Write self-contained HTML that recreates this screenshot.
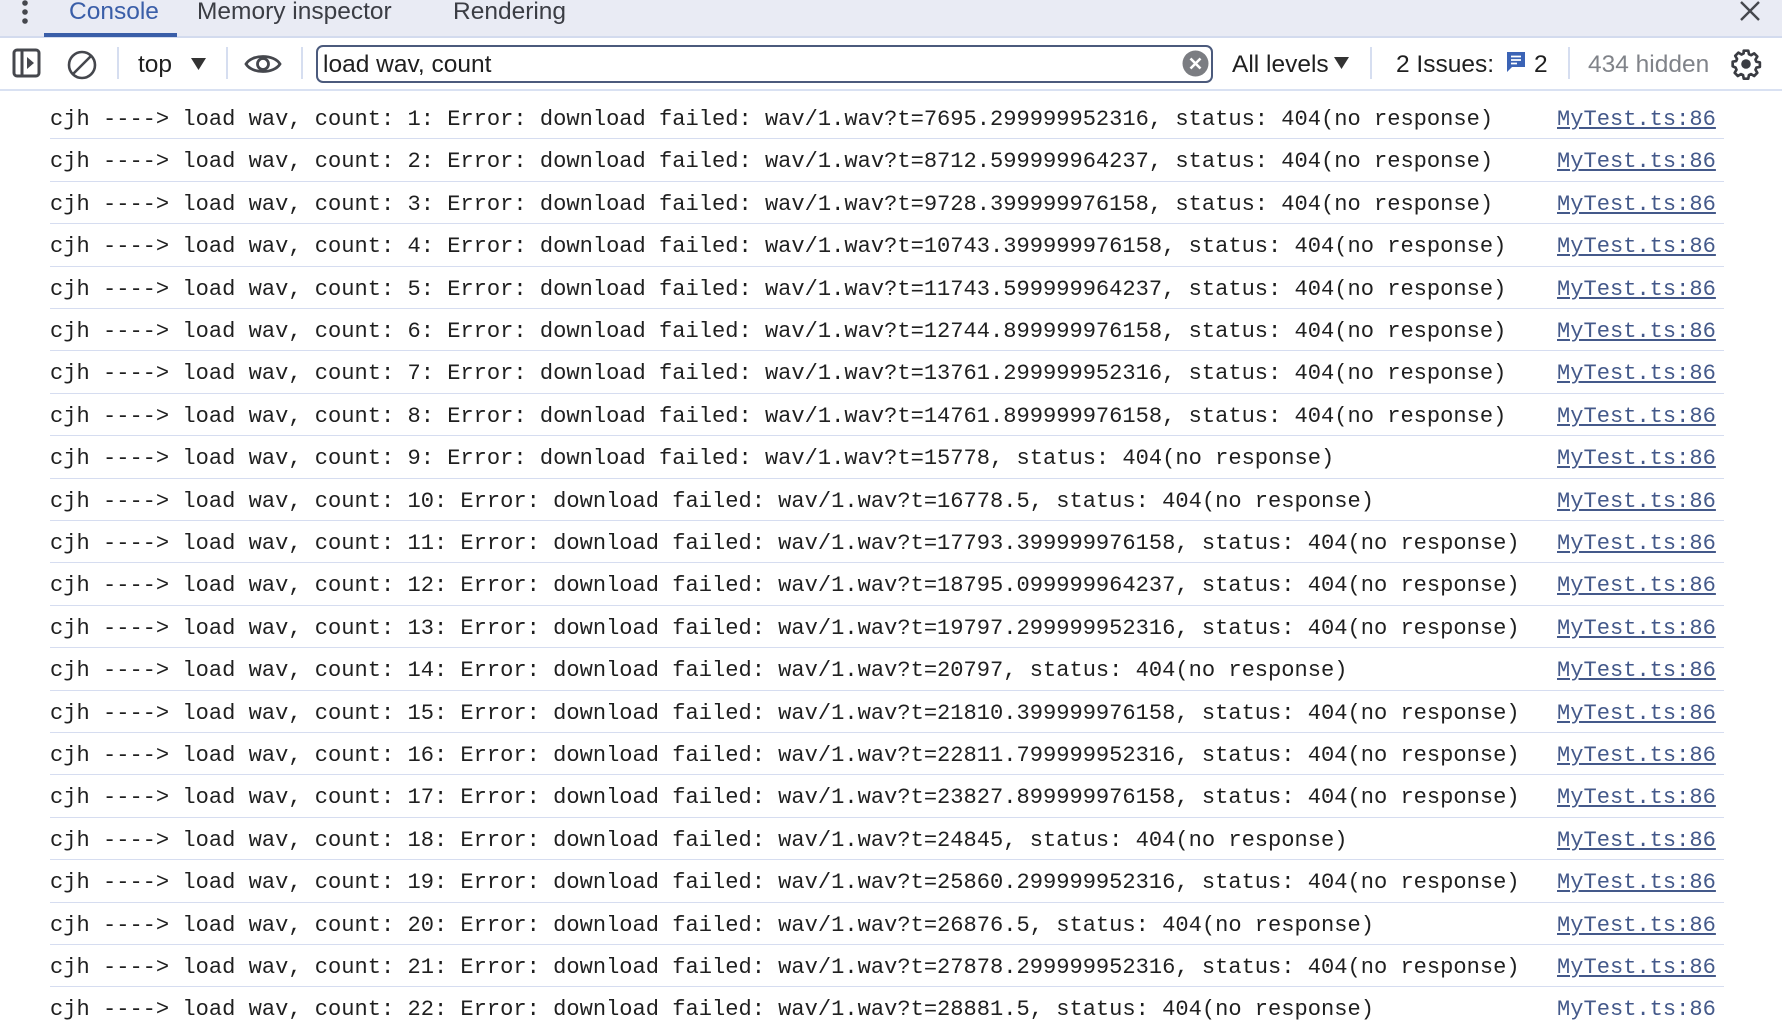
<!DOCTYPE html>
<html><head><meta charset="utf-8"><style>
*{margin:0;padding:0;box-sizing:border-box}
body{width:1782px;height:1018px;overflow:hidden;background:#fff;font-family:"Liberation Sans",Helvetica,sans-serif;position:relative}
.tabs{position:absolute;left:0;top:0;width:1782px;height:38px;background:#e9ebf4;border-bottom:2px solid #d3dbee}
.tab{position:absolute;top:-2px;font-size:24.5px;line-height:28px;color:#3b3d44}
.tb{position:absolute;left:0;top:38px;width:1782px;height:53px;border-bottom:2px solid #d9e1f2;background:#fff}
.t{position:absolute;font-size:24.5px;line-height:28px;color:#1f1f1f;top:13px}
.sep{position:absolute;top:9px;width:2px;height:32px;background:#d6def0}
.row{position:absolute;left:50px;width:1674px;height:42.4px;border-bottom:1.5px solid #d6ddf0}
.m{position:absolute;left:0;top:10px;line-height:26px;font-family:"Liberation Mono",monospace;font-size:22.07px;color:#1f1f1f;white-space:pre}
.lk{position:absolute;left:1507px;top:10px;line-height:26px;font-family:"Liberation Mono",monospace;font-size:22.07px;color:#44598a;text-decoration:underline}
</style></head><body>
<div class="tabs">
<svg style="position:absolute;left:20px;top:0" width="10" height="26"><circle cx="5" cy="3" r="2.8" fill="#45474d"/><circle cx="5" cy="12" r="2.8" fill="#45474d"/><circle cx="5" cy="21" r="2.8" fill="#45474d"/></svg>
<div class="tab" style="left:69px;color:#3a5ea8">Console</div>
<div style="position:absolute;left:44px;top:33px;width:133px;height:4px;background:#3a5ea8"></div>
<div class="tab" style="left:197px">Memory inspector</div>
<div class="tab" style="left:453px">Rendering</div>
<svg style="position:absolute;left:1738px;top:0" width="24" height="24"><path d="M3 2L21 20M21 2L3 20" stroke="#45474d" stroke-width="2.4"/></svg>
</div>
<div class="tb">
<svg style="position:absolute;left:12px;top:10px" width="30" height="30"><rect x="2" y="2" width="25" height="26" rx="3" fill="none" stroke="#45474d" stroke-width="3"/><line x1="10" y1="2" x2="10" y2="28" stroke="#45474d" stroke-width="3"/><path d="M15 9L22 15L15 21Z" fill="#45474d"/></svg>
<svg style="position:absolute;left:66px;top:11px" width="32" height="32"><circle cx="16" cy="16" r="13" fill="none" stroke="#45474d" stroke-width="2.6"/><line x1="7" y1="25" x2="25" y2="7" stroke="#45474d" stroke-width="2.6"/></svg>
<div class="sep" style="left:117px"></div>
<div class="t" style="left:138px">top</div>
<svg style="position:absolute;left:191px;top:20px" width="15" height="13"><path d="M0 0H15L7.5 12Z" fill="#333"/></svg>
<div class="sep" style="left:226px"></div>
<svg style="position:absolute;left:244px;top:12px" width="38" height="28"><path d="M2 14C8 4 30 4 36 14C30 24 8 24 2 14Z" fill="none" stroke="#45474d" stroke-width="2.8"/><circle cx="19" cy="14" r="5.5" fill="none" stroke="#45474d" stroke-width="2.8"/></svg>
<div class="sep" style="left:301px"></div>
<div style="position:absolute;left:316px;top:7px;width:897px;height:38px;border:2px solid #4b5a7c;border-radius:7px"></div>
<div class="t" style="left:323px">load wav, count</div>
<svg style="position:absolute;left:1182px;top:12px" width="27" height="27"><circle cx="13.5" cy="13.5" r="13" fill="#7b7d82"/><path d="M8.5 8.5L18.5 18.5M18.5 8.5L8.5 18.5" stroke="#fff" stroke-width="2.6"/></svg>
<div class="t" style="left:1232px">All levels</div>
<svg style="position:absolute;left:1334px;top:19px" width="15" height="13"><path d="M0 0H15L7.5 12Z" fill="#333"/></svg>
<div class="sep" style="left:1370px"></div>
<div class="t" style="left:1396px">2 Issues:</div>
<svg style="position:absolute;left:1506px;top:13px" width="20" height="23"><path d="M1 1H19V16H6L1 21Z" fill="#3b63b5"/><path d="M5 5.5H15M5 9H15M5 12.5H11" stroke="#fff" stroke-width="1.8"/></svg>
<div class="t" style="left:1534px">2</div>
<div class="sep" style="left:1568px"></div>
<div class="t" style="left:1588px;color:#808389">434 hidden</div>
<svg style="position:absolute;left:1730px;top:10px" width="32" height="32" viewBox="0 0 24 24"><path d="M10.3 2h3.4l.5 2.6 1.6.8 2.3-1.4 2.4 2.4-1.4 2.3.7 1.6 2.6.5v3.4l-2.6.5-.7 1.6 1.4 2.3-2.4 2.4-2.3-1.4-1.6.7-.5 2.7h-3.4l-.5-2.7-1.6-.7-2.3 1.4-2.4-2.4 1.4-2.3-.7-1.6L2 13.7v-3.4l2.6-.5.7-1.6-1.4-2.3 2.4-2.4 2.3 1.4 1.6-.8z" fill="none" stroke="#3a3c42" stroke-width="2" stroke-linejoin="round"/><circle cx="12" cy="12" r="3.6" fill="#3a3c42"/></svg>
</div>
<div class="row" style="top:97px"><span class="m">cjh ----&gt; load wav, count: 1: Error: download failed: wav/1.wav?t=7695.299999952316, status: 404(no response)</span><span class="lk">MyTest.ts:86</span></div>
<div class="row" style="top:139.4px"><span class="m">cjh ----&gt; load wav, count: 2: Error: download failed: wav/1.wav?t=8712.599999964237, status: 404(no response)</span><span class="lk">MyTest.ts:86</span></div>
<div class="row" style="top:181.8px"><span class="m">cjh ----&gt; load wav, count: 3: Error: download failed: wav/1.wav?t=9728.399999976158, status: 404(no response)</span><span class="lk">MyTest.ts:86</span></div>
<div class="row" style="top:224.2px"><span class="m">cjh ----&gt; load wav, count: 4: Error: download failed: wav/1.wav?t=10743.399999976158, status: 404(no response)</span><span class="lk">MyTest.ts:86</span></div>
<div class="row" style="top:266.6px"><span class="m">cjh ----&gt; load wav, count: 5: Error: download failed: wav/1.wav?t=11743.599999964237, status: 404(no response)</span><span class="lk">MyTest.ts:86</span></div>
<div class="row" style="top:309px"><span class="m">cjh ----&gt; load wav, count: 6: Error: download failed: wav/1.wav?t=12744.899999976158, status: 404(no response)</span><span class="lk">MyTest.ts:86</span></div>
<div class="row" style="top:351.4px"><span class="m">cjh ----&gt; load wav, count: 7: Error: download failed: wav/1.wav?t=13761.299999952316, status: 404(no response)</span><span class="lk">MyTest.ts:86</span></div>
<div class="row" style="top:393.8px"><span class="m">cjh ----&gt; load wav, count: 8: Error: download failed: wav/1.wav?t=14761.899999976158, status: 404(no response)</span><span class="lk">MyTest.ts:86</span></div>
<div class="row" style="top:436.2px"><span class="m">cjh ----&gt; load wav, count: 9: Error: download failed: wav/1.wav?t=15778, status: 404(no response)</span><span class="lk">MyTest.ts:86</span></div>
<div class="row" style="top:478.6px"><span class="m">cjh ----&gt; load wav, count: 10: Error: download failed: wav/1.wav?t=16778.5, status: 404(no response)</span><span class="lk">MyTest.ts:86</span></div>
<div class="row" style="top:521px"><span class="m">cjh ----&gt; load wav, count: 11: Error: download failed: wav/1.wav?t=17793.399999976158, status: 404(no response)</span><span class="lk">MyTest.ts:86</span></div>
<div class="row" style="top:563.4px"><span class="m">cjh ----&gt; load wav, count: 12: Error: download failed: wav/1.wav?t=18795.099999964237, status: 404(no response)</span><span class="lk">MyTest.ts:86</span></div>
<div class="row" style="top:605.8px"><span class="m">cjh ----&gt; load wav, count: 13: Error: download failed: wav/1.wav?t=19797.299999952316, status: 404(no response)</span><span class="lk">MyTest.ts:86</span></div>
<div class="row" style="top:648.2px"><span class="m">cjh ----&gt; load wav, count: 14: Error: download failed: wav/1.wav?t=20797, status: 404(no response)</span><span class="lk">MyTest.ts:86</span></div>
<div class="row" style="top:690.6px"><span class="m">cjh ----&gt; load wav, count: 15: Error: download failed: wav/1.wav?t=21810.399999976158, status: 404(no response)</span><span class="lk">MyTest.ts:86</span></div>
<div class="row" style="top:733px"><span class="m">cjh ----&gt; load wav, count: 16: Error: download failed: wav/1.wav?t=22811.799999952316, status: 404(no response)</span><span class="lk">MyTest.ts:86</span></div>
<div class="row" style="top:775.4px"><span class="m">cjh ----&gt; load wav, count: 17: Error: download failed: wav/1.wav?t=23827.899999976158, status: 404(no response)</span><span class="lk">MyTest.ts:86</span></div>
<div class="row" style="top:817.8px"><span class="m">cjh ----&gt; load wav, count: 18: Error: download failed: wav/1.wav?t=24845, status: 404(no response)</span><span class="lk">MyTest.ts:86</span></div>
<div class="row" style="top:860.2px"><span class="m">cjh ----&gt; load wav, count: 19: Error: download failed: wav/1.wav?t=25860.299999952316, status: 404(no response)</span><span class="lk">MyTest.ts:86</span></div>
<div class="row" style="top:902.6px"><span class="m">cjh ----&gt; load wav, count: 20: Error: download failed: wav/1.wav?t=26876.5, status: 404(no response)</span><span class="lk">MyTest.ts:86</span></div>
<div class="row" style="top:945px"><span class="m">cjh ----&gt; load wav, count: 21: Error: download failed: wav/1.wav?t=27878.299999952316, status: 404(no response)</span><span class="lk">MyTest.ts:86</span></div>
<div class="row" style="top:987.4px;border:none"><span class="m">cjh ----&gt; load wav, count: 22: Error: download failed: wav/1.wav?t=28881.5, status: 404(no response)</span><span class="lk" style="text-decoration:none">MyTest.ts:86</span></div>
</body></html>
